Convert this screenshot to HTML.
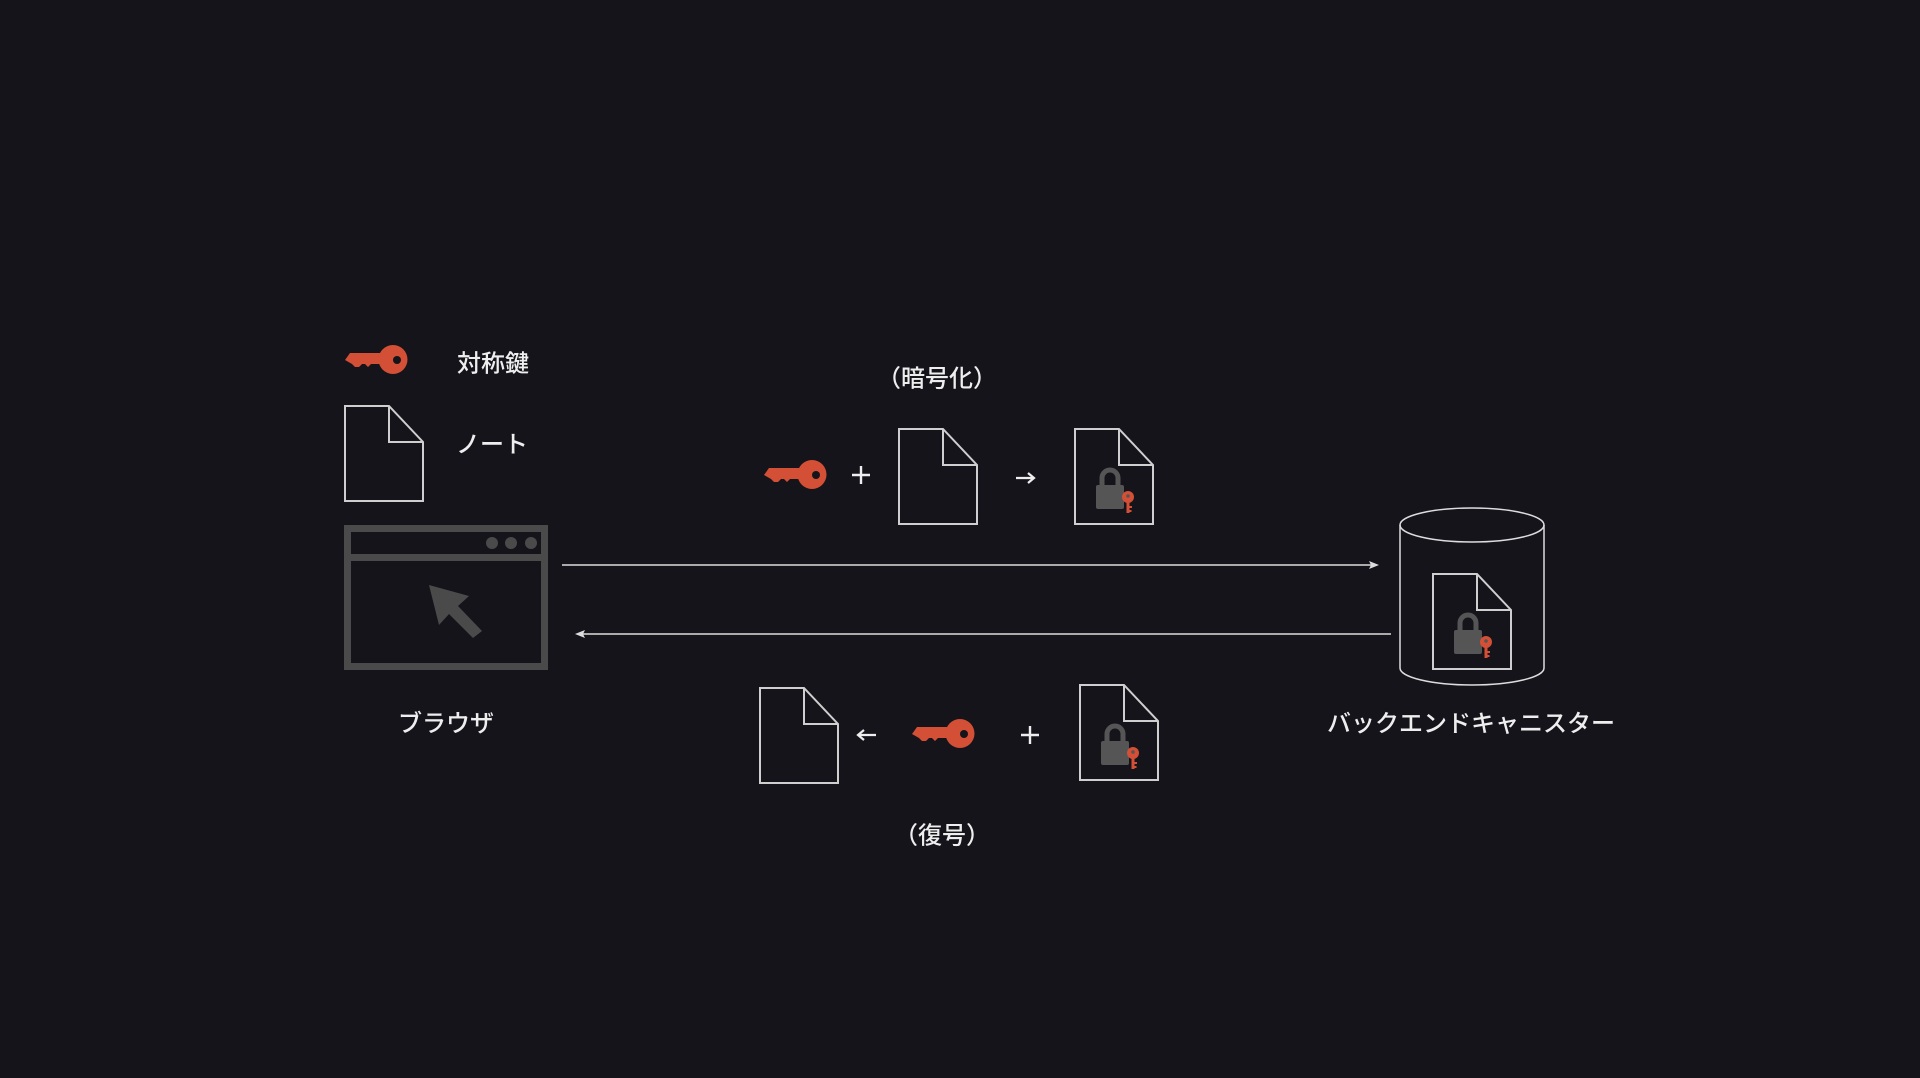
<!DOCTYPE html>
<html><head><meta charset="utf-8"><style>
html,body{margin:0;padding:0;background:#16141b;}
body{width:1920px;height:1078px;position:relative;overflow:hidden;font-family:"Liberation Sans","Noto Sans CJK JP",sans-serif;color:#eee;}
.t{position:absolute;font-size:24px;font-weight:500;white-space:nowrap;transform:translate(-50%,-50%);}
svg{position:absolute;left:0;top:0;}
</style></head><body>
<svg width="1920" height="1078" viewBox="0 0 1920 1078">
<defs>
<symbol id="key" viewBox="0 0 64 30" overflow="visible">
<path d="M1,15 L6,8 L36,8 L36,19 L27,19 L24,22 L21,19 L18,19 L15,22 L11,22 L8,19 Z" fill="#d34f36"/>
<circle cx="49" cy="14.5" r="14.5" fill="#d34f36"/>
<circle cx="53" cy="15" r="4" fill="#16141b"/>
</symbol>
<symbol id="doc" viewBox="0 0 80 97" overflow="visible">
<path d="M1,1 H45 L79,37 V96 H1 Z M45,1 V37 H79" fill="none" stroke="#cfcfcf" stroke-width="2"/>
</symbol>
<symbol id="ldoc" viewBox="0 0 80 97" overflow="visible">
<path d="M1,1 H45 L79,37 V96 H1 Z M45,1 V37 H79" fill="none" stroke="#cfcfcf" stroke-width="2"/>
<path d="M28,58 V50 A8,8 0 0 1 44,50 V58" fill="none" stroke="#555" stroke-width="5"/>
<rect x="22" y="57" width="28" height="24" rx="2" fill="#555"/>
<circle cx="54" cy="69" r="6" fill="#d34f36"/>
<circle cx="54" cy="68" r="1.8" fill="#555"/>
<rect x="52.5" y="72" width="3" height="13" fill="#d34f36"/>
<rect x="55" y="78" width="3" height="2" fill="#d34f36"/>
<rect x="55" y="82" width="2.5" height="2" fill="#d34f36"/>
</symbol>
</defs>
<use href="#key" x="344" y="345" width="64" height="30"/>
<use href="#doc" x="344" y="405" width="80" height="97"/>
<rect x="347.5" y="528.5" width="197" height="138" fill="none" stroke="#4a4a4a" stroke-width="7"/>
<rect x="344" y="554" width="204" height="7" fill="#4a4a4a"/>
<circle cx="492" cy="543" r="6" fill="#4a4a4a"/>
<circle cx="511" cy="543" r="6" fill="#4a4a4a"/>
<circle cx="531" cy="543" r="6" fill="#4a4a4a"/>
<path d="M429,585 L469,596 L458,606 L482,631 L473,638 L449,614 L439,625 Z" fill="#4a4a4a"/>
<use href="#key" x="763" y="460" width="64" height="30"/>
<use href="#doc" x="898" y="428" width="80" height="97"/>
<use href="#ldoc" x="1074" y="428" width="80" height="97"/>
<line x1="562" y1="565" x2="1374" y2="565" stroke="#ddd" stroke-width="1.5"/>
<path d="M1379,565 L1369,561 L1371,565 L1369,569 Z" fill="#ddd"/>
<line x1="580" y1="634" x2="1391" y2="634" stroke="#ddd" stroke-width="1.5"/>
<path d="M575,634 L585,630 L583,634 L585,638 Z" fill="#ddd"/>
<use href="#doc" x="759" y="687" width="80" height="97"/>
<use href="#key" x="911" y="719" width="64" height="30"/>
<use href="#ldoc" x="1079" y="684" width="80" height="97"/>
<ellipse cx="1472" cy="525" rx="72" ry="17" fill="none" stroke="#ddd" stroke-width="1.5"/>
<path d="M1400,525 V668 A72,17 0 0 0 1544,668 V525" fill="none" stroke="#ddd" stroke-width="1.5"/>
<use href="#ldoc" x="1432" y="573" width="80" height="97"/>
<!-- arrows as shapes -->
<path d="M1016,478 H1034 M1028,473 L1034,478 L1028,483" fill="none" stroke="#eee" stroke-width="2.2"/>
<path d="M876,735 H858 M864,730 L858,735 L864,740" fill="none" stroke="#eee" stroke-width="2.2"/>
<path d="M861,466 V484 M852,475 H870" stroke="#eee" stroke-width="2.4"/>
<path d="M1030,726 V744 M1021,735 H1039" stroke="#eee" stroke-width="2.4"/>
</svg>
<div class="t" style="left:493px;top:361px">対称鍵</div>
<div class="t" style="left:492px;top:442px">ノート</div>
<div class="t" style="left:937px;top:376px">（暗号化）</div>
<div class="t" style="left:446px;top:721px">ブラウザ</div>
<div class="t" style="left:1471px;top:721px">バックエンドキャニスター</div>
<div class="t" style="left:942px;top:833px">（復号）</div>
</body></html>
